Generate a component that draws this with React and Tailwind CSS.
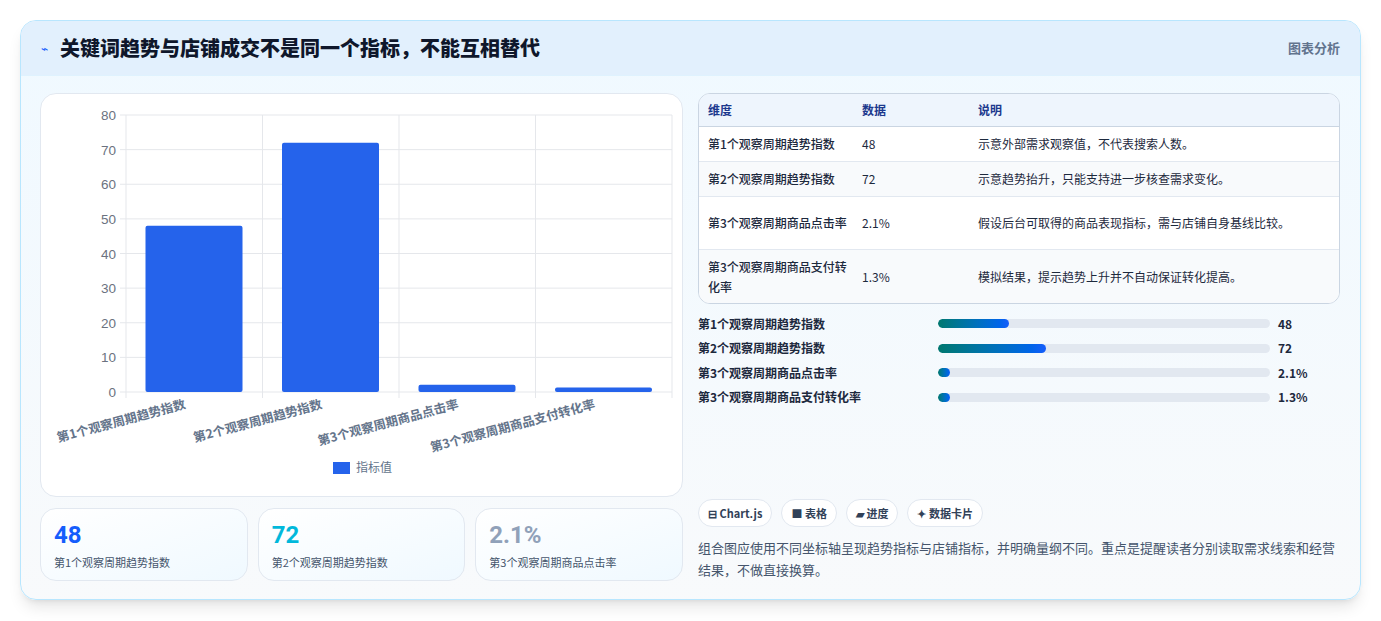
import React from 'react';

const font = { fontFamily: '"Noto Sans CJK SC", "Noto Sans", sans-serif' };

const rows = [
  ['第1个观察周期趋势指数', '48', '示意外部需求观察值，不代表搜索人数。'],
  ['第2个观察周期趋势指数', '72', '示意趋势抬升，只能支持进一步核查需求变化。'],
  ['第3个观察周期商品点击率', '2.1%', '假设后台可取得的商品表现指标，需与店铺自身基线比较。'],
  ['第3个观察周期商品支付转化率', '1.3%', '模拟结果，提示趋势上升并不自动保证转化提高。'],
];

const bars = [
  ['第1个观察周期趋势指数', '48', 21.5],
  ['第2个观察周期趋势指数', '72', 32.5],
  ['第3个观察周期商品点击率', '2.1%', 3.5],
  ['第3个观察周期商品支付转化率', '1.3%', 3.5],
];

function Chart() {
  const top = 21, bottom = 298, left = 85, right = 631;
  const h = bottom - top;
  const yv = [0, 10, 20, 30, 40, 50, 60, 70, 80];
  const data = [48, 72, 2.1, 1.3];
  const labels = ['第1个观察周期趋势指数', '第2个观察周期趋势指数', '第3个观察周期商品点击率', '第3个观察周期商品支付转化率'];
  const cw = (right - left) / 4;
  return (
    <svg width="643" height="403" className="block">
      {yv.map((v) => {
        const y = bottom - (v / 80) * h;
        return (
          <g key={v}>
            <line x1={left - 6} x2={right} y1={y} y2={y} stroke="#e5e7eb" />
            <text x={left - 10} y={y + 5} textAnchor="end" fontSize="13.5" fill="#6b7280" fontFamily="Liberation Sans, sans-serif">{v}</text>
          </g>
        );
      })}
      {[0, 1, 2, 3, 4].map((i) => (
        <line key={i} x1={left + i * cw} x2={left + i * cw} y1={top} y2={bottom + 6} stroke="#e5e7eb" />
      ))}
      {data.map((d, i) => {
        const bh = (d / 80) * h;
        return <rect key={i} x={left + i * cw + 19.5} y={bottom - bh} width={97} height={bh} rx="2" fill="#2563eb" />;
      })}
      {labels.map((l, i) => (
        <text key={i} transform={`translate(${left + i * cw + cw / 2 - 8},${bottom + 16}) rotate(-15)`} textAnchor="end" fontSize="12.5" fontWeight="600" fill="#64748b" style={font}>{l}</text>
      ))}
      <rect x="292" y="368" width="17" height="12" fill="#2563eb" />
      <text x="315" y="378" fontSize="12" fill="#64748b" style={font}>指标值</text>
    </svg>
  );
}

export default function App() {
  return (
    <div className="min-h-screen bg-white p-5" style={font}>
      <div className="rounded-2xl border border-sky-200 bg-gradient-to-b from-sky-50 to-slate-50 shadow-lg overflow-hidden">
        <div className="h-[55px] flex items-center justify-between px-5 bg-[#e2f0fd] border-b border-sky-100">
          <div className="flex items-center gap-3">
            <span className="text-blue-600 text-xs">⌁</span>
            <h1 className="text-[20px] font-black text-slate-900">关键词趋势与店铺成交不是同一个指标，不能互相替代</h1>
          </div>
          <span className="text-[13px] font-semibold text-slate-500">图表分析</span>
        </div>
        <div className="flex gap-[15px] pl-[19px] pr-5 pt-[17px] pb-[18px]">
          <div className="w-[643px] flex flex-col gap-[11px]">
            <div className="bg-white rounded-2xl border border-slate-200 h-[404px]">
              <Chart />
            </div>
            <div className="flex gap-[10px]">
              {[['48', '第1个观察周期趋势指数', 'text-blue-600'], ['72', '第2个观察周期趋势指数', 'text-cyan-500'], ['2.1%', '第3个观察周期商品点击率', 'text-slate-400']].map(([v, l, c]) => (
                <div key={l} className="flex-1 h-[73px] rounded-2xl border border-slate-200 bg-gradient-to-br from-white to-sky-50 px-[13px] pt-[10px]">
                  <div className={`text-[24px] font-bold leading-[32px] ${c}`} style={{ fontFamily: 'Roboto, sans-serif' }}>{v}</div>
                  <div className="text-[11px] text-slate-600 mt-[3px]">{l}</div>
                </div>
              ))}
            </div>
          </div>
          <div className="flex-1 flex flex-col">
            <div className="rounded-xl border border-slate-300 bg-white overflow-hidden text-[12px]">
              <div className="flex h-[33px] items-center bg-[#eef5fd] border-b border-slate-300 text-blue-900 font-semibold px-[9px]">
                <div className="w-[154px]">维度</div><div className="w-[116px]">数据</div><div>说明</div>
              </div>
              {rows.map((r, i) => (
                <div key={i} className={`flex items-center px-[9px] text-slate-800 ${i < 3 ? 'border-b border-slate-200' : ''} ${i % 2 ? 'bg-slate-50' : 'bg-white'} ${i >= 2 ? 'h-[53px]' : 'h-[35px]'}`}>
                  <div className="w-[154px] pr-[14px] font-medium leading-[20px]">{r[0]}</div>
                  <div className="w-[116px]">{r[1]}</div>
                  <div>{r[2]}</div>
                </div>
              ))}
            </div>
            <div className="flex flex-col gap-[9.5px] mt-[12px]">
              {bars.map(([l, v, p]) => (
                <div key={l} className="flex items-center h-[15px] text-[12px] font-semibold text-slate-800">
                  <div className="w-[240px]">{l}</div>
                  <div className="w-[332px] h-[9px] rounded-full bg-slate-200 overflow-hidden">
                    <div className="h-full rounded-full bg-gradient-to-r from-teal-700 to-blue-600" style={{ width: `${p}%` }} />
                  </div>
                  <div className="ml-2">{v}</div>
                </div>
              ))}
            </div>
            <div className="flex gap-[9px] mt-auto">
              {['⊟ Chart.js', '■ 表格', '▰ 进度', '✦ 数据卡片'].map((t) => (
                <span key={t} className="h-[28px] px-[9px] flex items-center rounded-full border border-slate-200 bg-white text-[11px] font-semibold text-slate-700">{t}</span>
              ))}
            </div>
            <p className="mt-[10px] text-[13px] leading-[22px] text-slate-600">组合图应使用不同坐标轴呈现趋势指标与店铺指标，并明确量纲不同。重点是提醒读者分别读取需求线索和经营结果，不做直接换算。</p>
          </div>
        </div>
      </div>
    </div>
  );
}
